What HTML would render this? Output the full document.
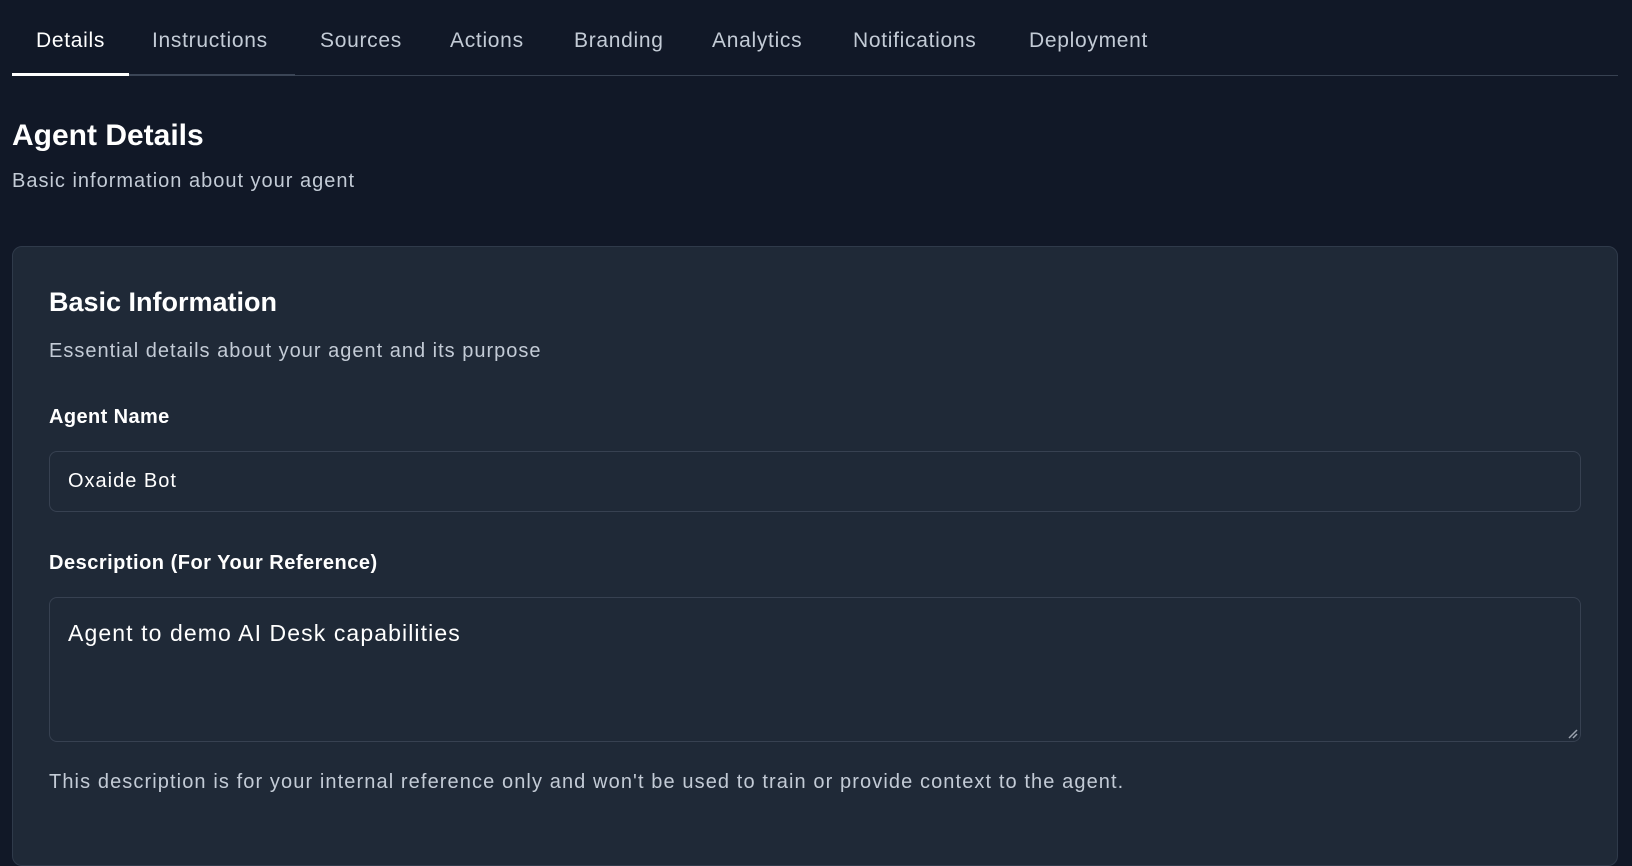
<!DOCTYPE html>
<html><head><style>
*{margin:0;padding:0;box-sizing:border-box}
body{width:1632px;height:826px;background:#111827;font-family:"Liberation Sans",sans-serif;color:#fff;overflow:hidden;position:relative}
.a{position:absolute;white-space:nowrap}
.tab{font-size:21px;color:#c3cbd6;top:29px;letter-spacing:0.7px}
.g{color:#c3cbd6;letter-spacing:1px}
</style></head><body>
<div class="a tab" style="left:36px;color:#fff">Details</div>
<div class="a tab" style="left:152px">Instructions</div>
<div class="a tab" style="left:320px">Sources</div>
<div class="a tab" style="left:450px">Actions</div>
<div class="a tab" style="left:574px">Branding</div>
<div class="a tab" style="left:712px">Analytics</div>
<div class="a tab" style="left:853px">Notifications</div>
<div class="a tab" style="left:1029px">Deployment</div>
<div class="a" style="left:12px;top:75px;width:1606px;height:1px;background:#374151"></div>
<div class="a" style="left:129px;top:74px;width:166px;height:2px;background:#3b4556"></div>
<div class="a" style="left:12px;top:73px;width:117px;height:3px;background:#fff"></div>
<div class="a" style="left:12px;top:119px;font-size:30px;font-weight:bold">Agent Details</div>
<div class="a g" style="left:12px;top:170px;font-size:20px">Basic information about your agent</div>
<div class="a" style="left:12px;top:246px;width:1606px;height:620px;background:#1f2937;border:1px solid #2f3a4a;border-radius:10px"></div>
<div class="a" style="left:49px;top:287px;font-size:27px;font-weight:bold">Basic Information</div>
<div class="a g" style="left:49px;top:340px;font-size:20px">Essential details about your agent and its purpose</div>
<div class="a" style="left:49px;top:406px;font-size:20px;font-weight:bold;letter-spacing:0.4px">Agent Name</div>
<div class="a" style="left:49px;top:451px;width:1532px;height:61px;border:1px solid #374151;border-radius:8px;background:#1f2937"></div>
<div class="a" style="left:68px;top:470px;font-size:20px;letter-spacing:1px">Oxaide Bot</div>
<div class="a" style="left:49px;top:552px;font-size:20px;font-weight:bold;letter-spacing:0.5px">Description (For Your Reference)</div>
<div class="a" style="left:49px;top:597px;width:1532px;height:145px;border:1px solid #374151;border-radius:8px;background:#1f2937"></div>
<div class="a" style="left:68px;top:620px;font-size:23px;letter-spacing:1.1px">Agent to demo AI Desk capabilities</div>
<svg class="a" style="left:1568px;top:729px" width="10" height="10"><path d="M1 9L9 1M5 9L9 5" stroke="#9ca3af" stroke-width="1.5"/></svg>
<div class="a" style="left:49px;top:771px;font-size:20px;color:#c3cbd6;letter-spacing:1.1px">This description is for your internal reference only and won't be used to train or provide context to the agent.</div>
</body></html>
